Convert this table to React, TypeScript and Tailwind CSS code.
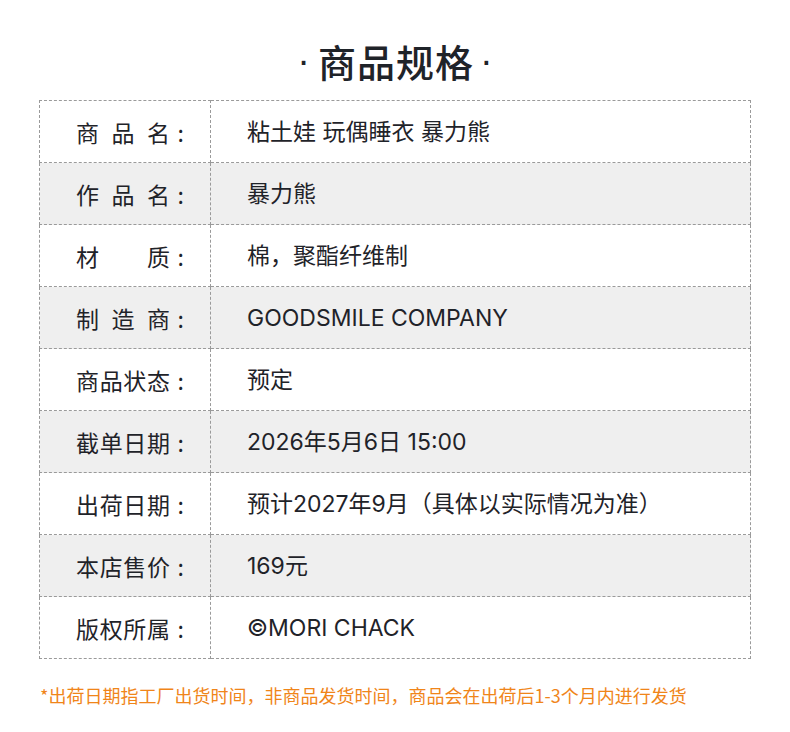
import React from "react";

const rows: [string, string][] = [
  ["商品名", "粘土娃 玩偶睡衣 暴力熊"],
  ["作品名", "暴力熊"],
  ["材质", "棉，聚酯纤维制"],
  ["制造商", "GOODSMILE COMPANY"],
  ["商品状态", "预定"],
  ["截单日期", "2026年5月6日 15:00"],
  ["出荷日期", "预计2027年9月（具体以实际情况为准）"],
  ["本店售价", "169元"],
  ["版权所属", "©MORI CHACK"],
];

export default function App() {
  return (
    <div
      className="w-[790px] h-[732px] bg-white text-[#1f2329]"
      style={{ fontFamily: '"Noto Sans CJK SC", "Noto Sans", sans-serif' }}
    >
      <h1 className="pt-[22px] h-[100px] flex justify-center items-center text-[38px] leading-[56px] font-medium">
        <span className="mr-[8px]" style={{ fontFamily: '"Liberation Sans", sans-serif' }}>·</span>
        <span className="tracking-[1px]">商品规格</span>
        <span className="ml-[6px]" style={{ fontFamily: '"Liberation Sans", sans-serif' }}>·</span>
      </h1>
      <table className="ml-[39px] w-[712px] border-collapse">
        <tbody>
          {rows.map(([k, v], i) => (
            <tr key={i} className={i % 2 === 1 ? "bg-[#efefef]" : "bg-white"}>
              <td className="w-[171px] h-[62px] border border-dashed border-[#9a9a9a] pl-[36px] p-0">
                <div className="w-[108px] flex justify-between items-center text-[23px] leading-[30px] whitespace-nowrap">
                  <span className="w-[94px] flex justify-between">
                    {k.split("").map((c, j) => (
                      <span key={j} className="shrink-0">{c}</span>
                    ))}
                  </span>
                  <span>:</span>
                </div>
              </td>
              <td
                className="h-[62px] border border-dashed border-[#9a9a9a] pl-[36px] text-[23px] leading-[30px] whitespace-pre"
                style={{ fontFamily: 'Inter, "Noto Sans CJK SC", sans-serif' }}
              >
                {v}
              </td>
            </tr>
          ))}
        </tbody>
      </table>
      <p className="mt-[24px] ml-[40px] text-[18px] leading-[24px] text-[#f08519]">
        *出荷日期指工厂出货时间，非商品发货时间，商品会在出荷后1-3个月内进行发货
      </p>
    </div>
  );
}
